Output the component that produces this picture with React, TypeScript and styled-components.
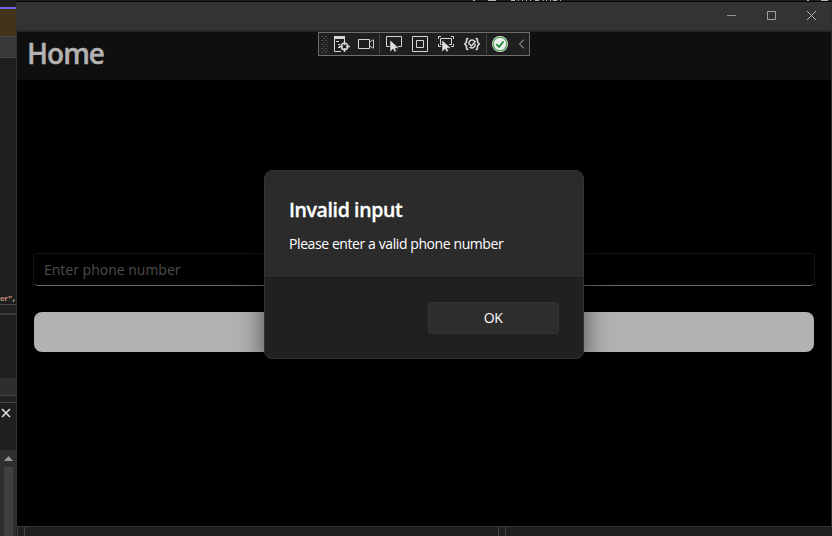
import React from "react";
import styled, { createGlobalStyle } from "styled-components";

const GlobalStyle = createGlobalStyle`
  * { box-sizing: border-box; }
  body { margin: 0; background: #1f1f1f; font-family: "Open Sans", "Noto Sans", sans-serif; overflow: hidden; }
`;

const Desktop = styled.div`
  display: grid;
  grid-template-columns: 16px 816px;
  width: 832px;
  height: 536px;
  overflow: hidden;
  background: #1f1f1f;
`;

const EditorStrip = styled.aside`
  display: flex;
  flex-direction: column;
  min-width: 0;
  overflow: hidden;
`;

const Band = styled.div<{ $h: number; $bg: string }>`
  flex: none;
  height: ${(p) => p.$h}px;
  background: ${(p) => p.$bg};
  overflow: hidden;
`;

const CodeBand = styled(Band)`
  display: flex;
  align-items: flex-end;
  white-space: pre;
  font: 700 8px/11px "Liberation Mono", monospace;
  letter-spacing: -0.9px;
  color: #ce9178;
  span { color: #c8c8c8; }
`;

const CloseBand = styled(Band)`
  display: flex;
  padding: 5px 0 0 1px;
`;

const ScrollBand = styled(Band)`
  display: flex;
  flex-direction: column;
  padding: 6px 3px 0 4px;
  svg { flex: none; display: block; }
`;

const ScrollThumb = styled.div`
  flex: 1;
  margin-top: 6px;
  background: #404040;
`;

const Column = styled.div`
  display: flex;
  flex-direction: column;
`;

const BackgroundEdge = styled.div`
  flex: none;
  height: 1px;
  background: #1f1f1f;
  svg { display: block; }
`;

const AppWindow = styled.main`
  position: relative;
  display: flex;
  flex-direction: column;
  height: 526px;
  border: 1px solid #333;
  border-top-color: #000;
  border-right-color: #2c2c2c;
  background: #000;
`;

const TitleBar = styled.div`
  display: flex;
  flex: none;
  justify-content: flex-end;
  height: 30px;
  background: #333;
  border-bottom: 2px solid #262626;
`;

const WindowButton = styled.button`
  display: flex;
  align-items: center;
  justify-content: center;
  width: 40px;
  height: 27px;
  padding: 0;
  border: 0;
  background: none;
`;

const Header = styled.header`
  flex: none;
  height: 48px;
  padding: 3px 0 0 10px;
  background: #0f0f0f;
`;

const PageTitle = styled.h1`
  margin: 0;
  color: #b2b2b2;
  font: 600 28px/37px "Open Sans", sans-serif;
  letter-spacing: -1px;
  -webkit-text-stroke: 0.4px #b2b2b2;
`;

const Form = styled.form`
  display: flex;
  flex-direction: column;
  gap: 26px;
  padding: 173px 16px 0;
`;

const PhoneField = styled.input`
  width: 782px;
  height: 33px;
  padding: 0 10px;
  border: 1px solid #141414;
  border-bottom-color: #6b6b6b;
  border-radius: 5px;
  outline: none;
  background: #000;
  font: 14px "Open Sans", sans-serif;
  &::placeholder { color: #4d4d4d; opacity: 1; }
`;

const SubmitButton = styled.button`
  width: 780px;
  height: 40px;
  margin-left: 1px;
  border: 0;
  border-radius: 8px;
  background: #b2b2b2;
`;

const DebugBar = styled.div`
  position: absolute;
  left: 301px;
  top: 30px;
  display: flex;
  align-items: center;
  width: 212px;
  height: 24px;
  border: 1px solid #6e6e6e;
  background: #1f1f1f;
  svg { display: block; flex: none; }
`;

const Tool = styled.span<{ $gap: number }>`
  margin-left: ${(p) => p.$gap}px;
`;

const Divider = styled.i<{ $gap: number }>`
  flex: none;
  width: 1px;
  height: 20px;
  margin-left: ${(p) => p.$gap}px;
  background: #414141;
`;

const Dialog = styled.section`
  position: absolute;
  left: 247px;
  top: 168px;
  width: 320px;
  height: 189px;
  overflow: hidden;
  border: 1px solid #333;
  border-radius: 8px;
  background: #202020;
  box-shadow: 0 16px 32px rgba(0, 0, 0, 0.38), 0 1px 18px rgba(0, 0, 0, 0.28);
`;

const DialogBody = styled.div`
  height: 107px;
  padding: 25px 24px 0;
  background: #2b2b2b;
  border-bottom: 1px solid #1d1d1d;
  color: #fff;
`;

const DialogTitle = styled.h2`
  margin: 0;
  font: 600 19.5px/28px "Open Sans", sans-serif;
  letter-spacing: -0.38px;
  -webkit-text-stroke: 0.3px #fff;
`;

const DialogText = styled.p`
  margin: 9px 0 0;
  font: 14px/22px "Open Sans", sans-serif;
  letter-spacing: -0.41px;
`;

const DialogActions = styled.div`
  display: flex;
  justify-content: flex-end;
  padding: 24px 24px 0;
`;

const OkButton = styled.button`
  width: 131px;
  height: 32px;
  padding: 0 1px 1px 0;
  border: 1px solid #343434;
  border-radius: 4px;
  background: #2d2d2d;
  color: #fff;
  font: 14px "Open Sans", sans-serif;
  letter-spacing: -0.5px;
`;

const DockFooter = styled.div`
  display: flex;
  height: 9px;
  background: #1f1f1f;
`;

const DockPanel = styled.div<{ $w: number }>`
  width: ${(p) => p.$w}px;
  border-right: 1px solid #424242;
`;

const TextEdge = () => (
  <svg width="816" height="1" shapeRendering="crispEdges">
    <path
      d="M457 .5h2M472 .5h8M495 .5h4M502 .5h1M506 .5h1M510 .5h1M514 .5h1M519 .5h4M527 .5h1M530 .5h1M534 .5h1M537 .5h4M544 .5h1M791 .5h2M805 .5h7"
      stroke="#b5b5b5"
    />
  </svg>
);

const Grip = () => (
  <svg width="7" height="18">
    <path
      d="M1 1v17M5 1v17"
      stroke="#4c4c4c"
      strokeWidth="2"
      strokeDasharray="1 3"
    />
    <path d="M3 3v15M7 3v15" stroke="#4c4c4c" strokeWidth="2" strokeDasharray="1 3" />
  </svg>
);

const TreeTargetIcon = () => (
  <svg width="16" height="16" fill="none" stroke="#d6d6d6">
    <path d="M0 0h11v3H0z" fill="#d6d6d6" stroke="none" />
    <path d="M.5 3v12.5H7M10.5 3v2M2 5.5h3M4 8.5h2M4 11.5h2" />
    <circle cx="10.5" cy="10.5" r="3.2" strokeWidth="1.5" />
    <path d="M10.5 5v4M10.5 12v4M5 10.5h4M12 10.5h4" strokeWidth="1.5" />
  </svg>
);

const CameraIcon = () => (
  <svg width="16" height="16" fill="none" stroke="#d6d6d6">
    <path d="M.5 3.5h11v9H.5zM11.5 6.5l3-2.5h1v8h-1l-3-2.5" />
  </svg>
);

const Pointer = () => (
  <path d="M4 4v12l3-3 1.5 3 2-1-1.4-2.8H13z" fill="#e0e0e0" stroke="#1f1f1f" strokeWidth=".5" />
);

const SelectIcon = () => (
  <svg width="16" height="16" fill="none" stroke="#d6d6d6">
    <path d="M4 10.5H.5V.5h15v10H12" />
    <Pointer />
  </svg>
);

const LayoutIcon = () => (
  <svg width="16" height="16" fill="none" stroke="#d6d6d6">
    <path d="M.5 .5h15v15H.5zM4.5 4.5h7v7h-7z" />
  </svg>
);

const FocusIcon = () => (
  <svg width="16" height="16" fill="none" stroke="#d6d6d6">
    <path d="M.5 3V.5H3M13 .5h2.5V3M.5 8v2.5H3M13 10.5h2.5V8M5 8.5H2.5v-6h11v6H11" />
    <Pointer />
  </svg>
);

const HotReloadIcon = () => (
  <svg width="16" height="16" fill="none" stroke="#dcdcdc">
    <path d="M4.5 2.5h-1Q2.5 2.5 2.5 4v2L.8 8l1.7 2v2q0 1.5 1 1.5h1M11.5 2.5h1q1 0 1 1.5v2l1.7 2-1.7 2v2q0 1.5-1 1.5h-1" strokeWidth="1.6" />
    <path d="M4.8 8.5Q4.8 4 8 4q1.500 0 2.500 1M11.200 7.500Q11.200 12 8 12q-1.500 0-2.500-1M5.500 8l2 2 4-5" strokeWidth="1.4" />
  </svg>
);

const CheckIcon = () => (
  <svg width="16" height="16" fill="none">
    <circle cx="8" cy="8" r="8" fill="#eee" />
    <circle cx="8" cy="8" r="6.8" stroke="#399b43" strokeWidth="1.1" />
    <path d="M4.3 8.2l2.7 2.7 4.5-5.5" stroke="#238b31" strokeWidth="1.7" />
  </svg>
);

const ChevronIcon = () => (
  <svg width="7" height="10" fill="none">
    <path d="M5.8.8L1.5 5l4.3 4.2" stroke="#777" strokeWidth="1.3" />
  </svg>
);

export default function App() {
  return (
    <>
      <GlobalStyle />
      <Desktop>
        <EditorStrip>
          <Band $h={7} $bg="#1f1f1f" />
          <Band $h={2} $bg="#7160e8" />
          <Band $h={27} $bg="#42341b" />
          <Band $h={1} $bg="#4a4a4a" />
          <Band $h={20} $bg="#383838" />
          <Band $h={1} $bg="#464646" />
          <CodeBand $h={246} $bg="#1e1e1e">er"<span>,</span></CodeBand>
          <Band $h={1} $bg="#464646" />
          <Band $h={8} $bg="#222" />
          <Band $h={2} $bg="#3c3c3c" />
          <Band $h={63} $bg="#1f1f1f" />
          <Band $h={17} $bg="#2e2e2e" />
          <Band $h={1} $bg="#444" />
          <Band $h={6} $bg="#222" />
          <Band $h={1} $bg="#444" />
          <CloseBand $h={47} $bg="#1f1f1f">
            <svg width="10" height="10">
              <path d="M1 1l8 8M9 1L1 9" stroke="#dedede" strokeWidth="1.6" />
            </svg>
          </CloseBand>
          <ScrollBand $h={86} $bg="#2f2f2f">
            <svg width="9" height="5"><path d="M4.5 0L9 5H0z" fill="#999" /></svg>
            <ScrollThumb />
          </ScrollBand>
        </EditorStrip>
        <Column>
          <BackgroundEdge><TextEdge /></BackgroundEdge>
          <AppWindow>
            <TitleBar>
              <WindowButton aria-label="Minimize">
                <svg width="9" height="9"><path d="M0 4.5h9" stroke="#929292" /></svg>
              </WindowButton>
              <WindowButton aria-label="Maximize">
                <svg width="9" height="9"><path d="M.5.5h8v8h-8z" fill="none" stroke="#a0a0a0" /></svg>
              </WindowButton>
              <WindowButton aria-label="Close">
                <svg width="9" height="9"><path d="M0 0l9 9M9 0L0 9" stroke="#b2b2b2" /></svg>
              </WindowButton>
            </TitleBar>
            <Header><PageTitle>Home</PageTitle></Header>
            <Form>
              <PhoneField placeholder="Enter phone number" />
              <SubmitButton type="button" aria-label="Submit" />
            </Form>
            <DebugBar>
              <Tool $gap={2}><Grip /></Tool>
              <Tool $gap={6}><TreeTargetIcon /></Tool>
              <Tool $gap={8}><CameraIcon /></Tool>
              <Divider $gap={5} />
              <Tool $gap={6}><SelectIcon /></Tool>
              <Tool $gap={10}><LayoutIcon /></Tool>
              <Tool $gap={10}><FocusIcon /></Tool>
              <Tool $gap={10}><HotReloadIcon /></Tool>
              <Divider $gap={6} />
              <Tool $gap={5}><CheckIcon /></Tool>
              <Tool $gap={10}><ChevronIcon /></Tool>
            </DebugBar>
            <Dialog role="dialog">
              <DialogBody>
                <DialogTitle>Invalid input</DialogTitle>
                <DialogText>Please enter a valid phone number</DialogText>
              </DialogBody>
              <DialogActions><OkButton>OK</OkButton></DialogActions>
            </Dialog>
          </AppWindow>
          <DockFooter>
            <DockPanel $w={2} />
            <DockPanel $w={7} />
            <DockPanel $w={474} />
            <DockPanel $w={7} />
          </DockFooter>
        </Column>
      </Desktop>
    </>
  );
}
